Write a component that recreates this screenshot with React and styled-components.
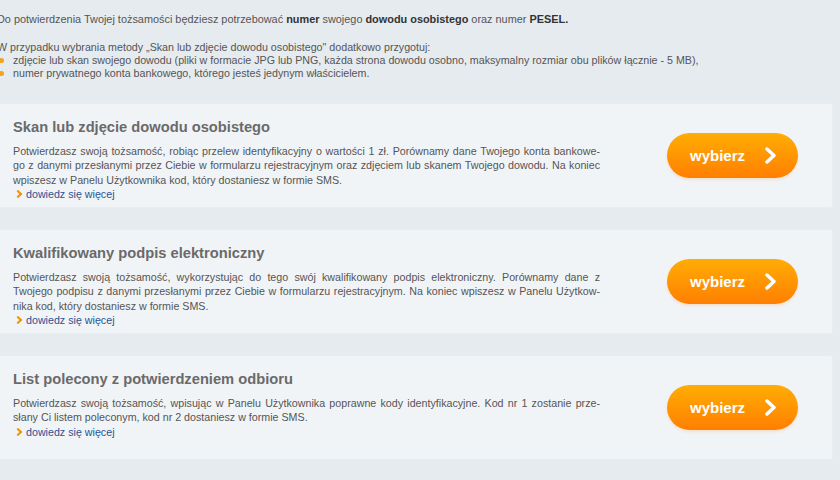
import React from "react";
import styled, { createGlobalStyle } from "styled-components";

const Global = createGlobalStyle`
  html, body {
    margin: 0;
    padding: 0;
    background: #e6ebf0;
    font-family: "Liberation Sans", Arial, sans-serif;
    overflow: hidden;
  }
`;

const Page = styled.div`
  width: 836px;
  margin-left: -3px;
  padding-top: 12px;
  color: #555;
  font-size: 10.7px;
`;

const Lead = styled.p`
  margin: 0;
  font-size: 10.9px;
  line-height: 14px;
  b {
    color: #333;
  }
`;

const Requirements = styled.div`
  margin-top: 15px;
  line-height: 13px;
`;

const Bullets = styled.ul`
  list-style: none;
  margin: 0;
  padding: 0;
`;

const Bullet = styled.li`
  position: relative;
  padding-left: 16px;
  &::before {
    content: "";
    position: absolute;
    left: 2px;
    top: 4px;
    width: 5px;
    height: 5px;
    border-radius: 50%;
    background: #f7a21b;
  }
`;

const Methods = styled.div`
  margin-top: 23px;
  display: flex;
  flex-direction: column;
  gap: 21px;
`;

const Card = styled.section`
  display: flex;
  align-items: center;
  justify-content: space-between;
  min-height: 105px;
  box-sizing: border-box;
  padding: 0 34px 0 16px;
  background: #f1f4f7;
  border: 1px solid #e9edf1;
  border-left: none;
  border-radius: 0 3px 3px 0;
`;

const Info = styled.div`
  align-self: flex-start;
  width: 587px;
  padding-top: 13px;
`;

const Title = styled.h2`
  margin: 0 0 7px;
  font-size: 14.7px;
  line-height: 20px;
  font-weight: bold;
  color: #6a6a6a;
`;

const Line = styled.span`
  display: block;
  white-space: nowrap;
  line-height: 14.3px;
  text-align: justify;
  text-align-last: ${(p) => (p.$last ? "left" : "justify")};
`;

const More = styled.a`
  display: flex;
  align-items: center;
  gap: 5px;
  line-height: 14.3px;
  color: #2c5294;
  text-decoration: none;
  &::before {
    content: "";
    width: 4px;
    height: 4px;
    margin-left: 2px;
    border-right: 2px solid #f29400;
    border-bottom: 2px solid #f29400;
    transform: rotate(-45deg);
  }
`;

const Choose = styled.button`
  display: flex;
  align-items: center;
  gap: 19px;
  width: 131px;
  height: 45px;
  padding: 0 0 0 23px;
  border: none;
  border-radius: 23px;
  background: linear-gradient(#ffad05, #ff7f00);
  box-shadow: 0 2px 3px rgba(255, 170, 90, 0.25);
  color: #fff;
  font-family: "Liberation Sans", Arial, sans-serif;
  font-size: 15px;
  font-weight: bold;
  cursor: pointer;
`;

const Chevron = () => (
  <svg width="13" height="17" viewBox="0 0 13 17">
    <path
      d="M3 2 L10 8.5 L3 15"
      fill="none"
      stroke="#fff"
      strokeWidth="3.4"
      strokeLinecap="round"
      strokeLinejoin="round"
    />
  </svg>
);

const methods = [
  {
    title: "Skan lub zdjęcie dowodu osobistego",
    lines: [
      "Potwierdzasz swoją tożsamość, robiąc przelew identyfikacyjny o wartości 1 zł. Porównamy dane Twojego konta bankowe-",
      "go z danymi przesłanymi przez Ciebie w formularzu rejestracyjnym oraz zdjęciem lub skanem Twojego dowodu. Na koniec",
      "wpiszesz w Panelu Użytkownika kod, który dostaniesz w formie SMS.",
    ],
  },
  {
    title: "Kwalifikowany podpis elektroniczny",
    lines: [
      "Potwierdzasz swoją tożsamość, wykorzystując do tego swój kwalifikowany podpis elektroniczny. Porównamy dane z",
      "Twojego podpisu z danymi przesłanymi przez Ciebie w formularzu rejestracyjnym. Na koniec wpiszesz w Panelu Użytkow-",
      "nika kod, który dostaniesz w formie SMS.",
    ],
  },
  {
    title: "List polecony z potwierdzeniem odbioru",
    lines: [
      "Potwierdzasz swoją tożsamość, wpisując w Panelu Użytkownika poprawne kody identyfikacyjne. Kod nr 1 zostanie prze-",
      "słany Ci listem poleconym, kod nr 2 dostaniesz w formie SMS.",
    ],
  },
];

export default function App() {
  return (
    <>
      <Global />
      <Page>
        <Lead>
          Do potwierdzenia Twojej tożsamości będziesz potrzebować <b>numer</b> swojego{" "}
          <b>dowodu osobistego</b> oraz numer <b>PESEL.</b>
        </Lead>
        <Requirements>
          W przypadku wybrania metody „Skan lub zdjęcie dowodu osobistego" dodatkowo przygotuj:
          <Bullets>
            <Bullet>
              zdjęcie lub skan swojego dowodu (pliki w formacie JPG lub PNG, każda strona dowodu osobno,
              maksymalny rozmiar obu plików łącznie - 5 MB),
            </Bullet>
            <Bullet>numer prywatnego konta bankowego, którego jesteś jedynym właścicielem.</Bullet>
          </Bullets>
        </Requirements>
        <Methods>
          {methods.map((m) => (
            <Card key={m.title}>
              <Info>
                <Title>{m.title}</Title>
                {m.lines.map((l, i) => (
                  <Line key={i} $last={i === m.lines.length - 1}>
                    {l}
                  </Line>
                ))}
                <More href="#">dowiedz się więcej</More>
              </Info>
              <Choose>
                wybierz
                <Chevron />
              </Choose>
            </Card>
          ))}
        </Methods>
      </Page>
    </>
  );
}
